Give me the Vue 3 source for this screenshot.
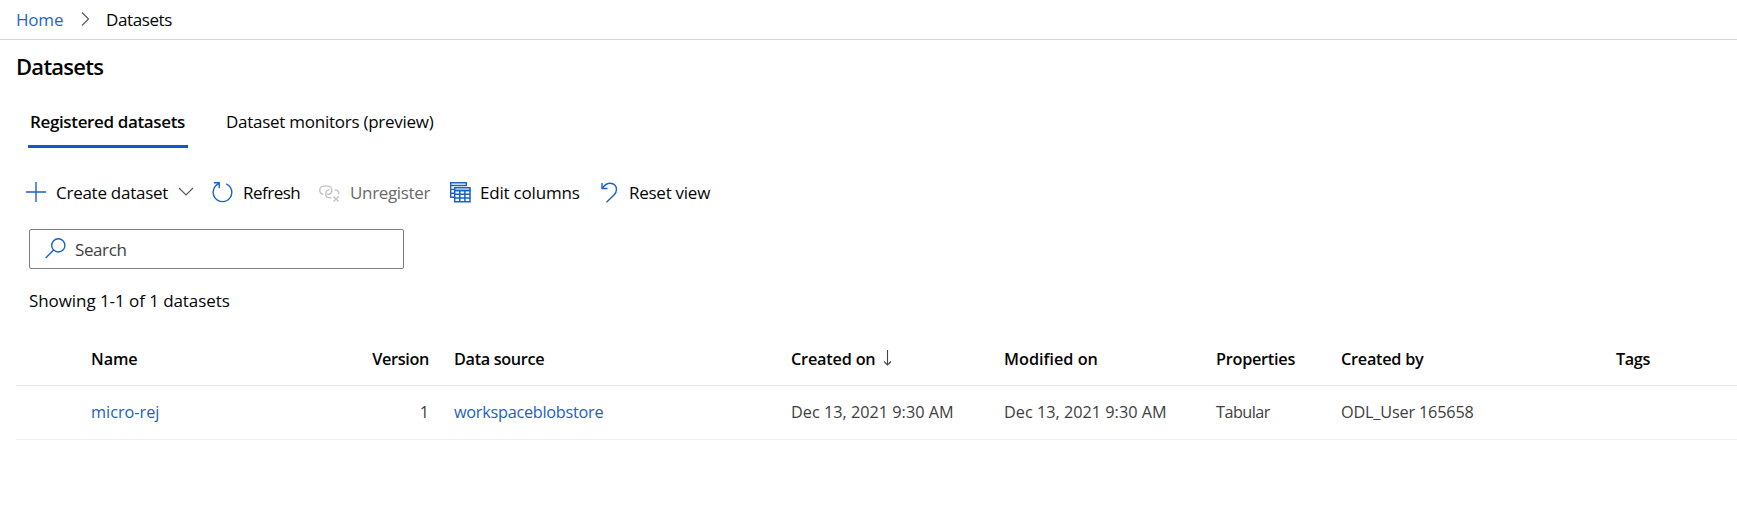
<script setup>
const columns = [
  { key: 'name', label: 'Name' },
  { key: 'version', label: 'Version' },
  { key: 'source', label: 'Data source' },
  { key: 'created', label: 'Created on', sorted: true },
  { key: 'modified', label: 'Modified on' },
  { key: 'properties', label: 'Properties' },
  { key: 'author', label: 'Created by' },
  { key: 'tags', label: 'Tags' },
]

const rows = [
  {
    name: 'micro-rej',
    version: '1',
    source: 'workspaceblobstore',
    created: 'Dec 13, 2021 9:30 AM',
    modified: 'Dec 13, 2021 9:30 AM',
    properties: 'Tabular',
    author: 'ODL_User 165658',
    tags: '',
  },
]

const links = ['name', 'source']
</script>

<template>
  <div class="page">
    <nav class="breadcrumb">
      <a class="home">Home</a>
      <svg class="sep" width="9" height="16" viewBox="0 0 9 16"><path d="M1 1.5 7.5 8 1 14.5" /></svg>
      <span class="here">Datasets</span>
    </nav>

    <h1>Datasets</h1>

    <div class="tabs">
      <div class="tab active">Registered datasets</div>
      <div class="tab">Dataset monitors (preview)</div>
    </div>

    <div class="toolbar">
      <button class="cmd create">
        <svg width="20" height="20" viewBox="0 0 20 20"><path d="M10 0V20M0 10H20" /></svg>
        <span>Create dataset</span>
        <svg class="chevron" width="16" height="9" viewBox="0 0 16 9"><path d="M1 1 8 8 15 1" /></svg>
      </button>
      <button class="cmd refresh">
        <svg width="21" height="21" viewBox="0 0 21 21"><path d="M7 1.7A9.3 9.3 0 1 0 14.2 1.8M1.8 .8H7.2V6.2" /></svg>
        <span>Refresh</span>
      </button>
      <button class="cmd unregister" disabled>
        <svg width="21" height="18" viewBox="0 0 21 18">
          <path d="M4.400 9.200C2.100 9 .8 7.200 .8 5.200 .8 2.900 2.500 1.100 4.800 1.100H9C11.300 1.100 12.800 2.900 12.800 5.200 12.800 7.500 11.200 9.200 9 9.200H8.200" />
          <path d="M12.400 12.800H10.800C8.500 12.800 6.800 11.100 6.800 8.900 6.800 6.700 8.400 5 10.400 4.900M15.600 4.900C18.200 4.900 19.900 6.700 19.900 9.300" />
          <path d="M14.500 11.400 19.600 16.500M19.600 11.400 14.500 16.500" />
        </svg>
        <span>Unregister</span>
      </button>
      <button class="cmd columns">
        <svg width="21" height="21" viewBox="0 0 21 21">
          <path class="bar" d="M.7 .7H16.300V3.500H.7Z" />
          <path d="M.7 3.500V15.300H4M.7 7.400H4M.7 11.300H4" />
          <path class="bar" d="M4.700 5.700H20V8.500H4.700Z" />
          <path class="bar" d="M4.700 8.500H20V19.700H4.700ZM4.700 12.200H20M4.700 16H20M9.800 8.500V19.700M14.900 8.500V19.700" />
        </svg>
        <span>Edit columns</span>
      </button>
      <button class="cmd reset">
        <svg width="17" height="21" viewBox="0 0 17 21"><path d="M1 1V6.500H6.500M1.200 6.300C3.500 3 6 1.200 9.200 1.200 13 1.200 15.500 4 15.500 7.500 15.500 9.700 14.700 11.200 13 12.900L5.500 20.300" /></svg>
        <span>Reset view</span>
      </button>
    </div>

    <div class="search">
      <svg width="21" height="21" viewBox="0 0 21 21"><circle cx="13.300" cy="7.400" r="6.600" /><path d="M8.600 12.100 .6 20.100" /></svg>
      <span>Search</span>
    </div>

    <p class="summary">Showing 1-1 of 1 datasets</p>

    <div class="grid">
      <div class="row head">
        <div v-for="c in columns" :key="c.key" :class="['cell', c.key]">
          {{ c.label }}
          <svg v-if="c.sorted" class="sort" width="9" height="16" viewBox="0 0 9 16"><path d="M4.500 0V15M1 11.500 4.500 15 8 11.500" /></svg>
        </div>
      </div>
      <div v-for="r in rows" :key="r.name" class="row body">
        <div v-for="c in columns" :key="c.key" :class="['cell', c.key, { link: links.includes(c.key) }]">{{ r[c.key] }}</div>
      </div>
    </div>
  </div>
</template>

<style>
body { background: #fff; }
</style>

<style scoped>
.page {
  height: 506px;
  overflow: hidden;
  background: #fff;
  color: #050505;
  font: 17px/24px "Open Sans", "Noto Sans", sans-serif;
  letter-spacing: -0.26px;
}
svg { flex: none; fill: none; stroke: #1a62c6; stroke-width: 1.4; }

.breadcrumb {
  box-sizing: border-box;
  display: flex;
  align-items: flex-start;
  height: 40px;
  padding: 8px 0 0 16px;
  border-bottom: 1px solid #d6d6d6;
}
.home { width: 65px; color: #1c67c9; letter-spacing: -0.2px; }
.sep { margin: 3px 16px 0 0; stroke: #555; stroke-width: 1.1; }
.here { letter-spacing: -0.4px; }

h1 {
  margin: 11px 0 0 16px;
  font-size: 22px;
  line-height: 30px;
  font-weight: 600;
  letter-spacing: -0.75px;
}

.tabs { display: flex; margin: 29px 0 0 28px; }
.tab { padding: 0 2px 11px; margin-right: 36px; border-bottom: 3px solid transparent; }
.tab.active {
  width: 156px;
  font-weight: 600;
  letter-spacing: -0.36px;
  white-space: nowrap;
  border-color: #0f5ac8;
}

.toolbar { display: flex; align-items: center; height: 24px; margin: 32px 0 0 26px; }
.cmd {
  display: flex;
  align-items: center;
  gap: 10px;
  padding: 0;
  border: 0;
  background: none;
  color: inherit;
  font: inherit;
  letter-spacing: inherit;
  white-space: nowrap;
}
.cmd span { padding-top: 2px; }
.create { width: 186px; }
.chevron { margin-top: -2px; stroke: #555; stroke-width: 1.1; }
.refresh { width: 107px; letter-spacing: -0.5px; }
.unregister { width: 131px; color: #6a6a6a; letter-spacing: -0.34px; }
.unregister svg { stroke: #c4c4c4; margin-top: 3px; }
.columns { width: 151px; gap: 9px; letter-spacing: -0.2px; }
.columns .bar { stroke-width: 1.5; }
.reset { gap: 11px; }

.search {
  box-sizing: border-box;
  display: flex;
  align-items: center;
  gap: 9px;
  width: 375px;
  height: 40px;
  margin: 25px 0 0 29px;
  padding-left: 15px;
  border: 1px solid #7d7d7d;
  border-radius: 2px;
  color: #404040;
}
.search svg { margin-top: -1px; }
.search span { padding-top: 2px; letter-spacing: -0.4px; }

.summary { margin: 20px 0 0 29px; letter-spacing: -0.07px; }

.grid { margin: 19px 0 0 16px; font-size: 16.25px; }
.row {
  box-sizing: border-box;
  display: grid;
  grid-template-columns: 253px 86px 337px 213px 212px 125px 275px 1fr;
  padding-left: 75px;
  align-items: center;
}
.head { height: 54px; padding-top: 1px; border-bottom: 1px solid #e6e6e6; font-weight: 600; }
.body { height: 54px; padding-bottom: 2px; border-bottom: 1px solid #efefef; color: #404040; letter-spacing: 0; }
.cell { display: flex; white-space: nowrap; }
.cell.version { justify-content: flex-end; padding-right: 1px; }
.cell.source, .cell.created, .cell.modified, .cell.properties, .cell.author, .cell.tags { padding-left: 24px; margin-right: -24px; }
.head .name { letter-spacing: -0.1px; }
.head .version { letter-spacing: -0.35px; }
.head .source { letter-spacing: -0.34px; }
.head .created { letter-spacing: -0.2px; }
.head .modified { letter-spacing: 0; }
.head .tags { letter-spacing: -0.4px; }
.body .source { letter-spacing: -0.26px; }
.body .properties { letter-spacing: -0.55px; }
.body .author { letter-spacing: -0.18px; }
.body .link { color: #1c62bd; }
.sort { margin: 3px 0 0 8px; stroke: #444; stroke-width: 1.1; }
</style>
